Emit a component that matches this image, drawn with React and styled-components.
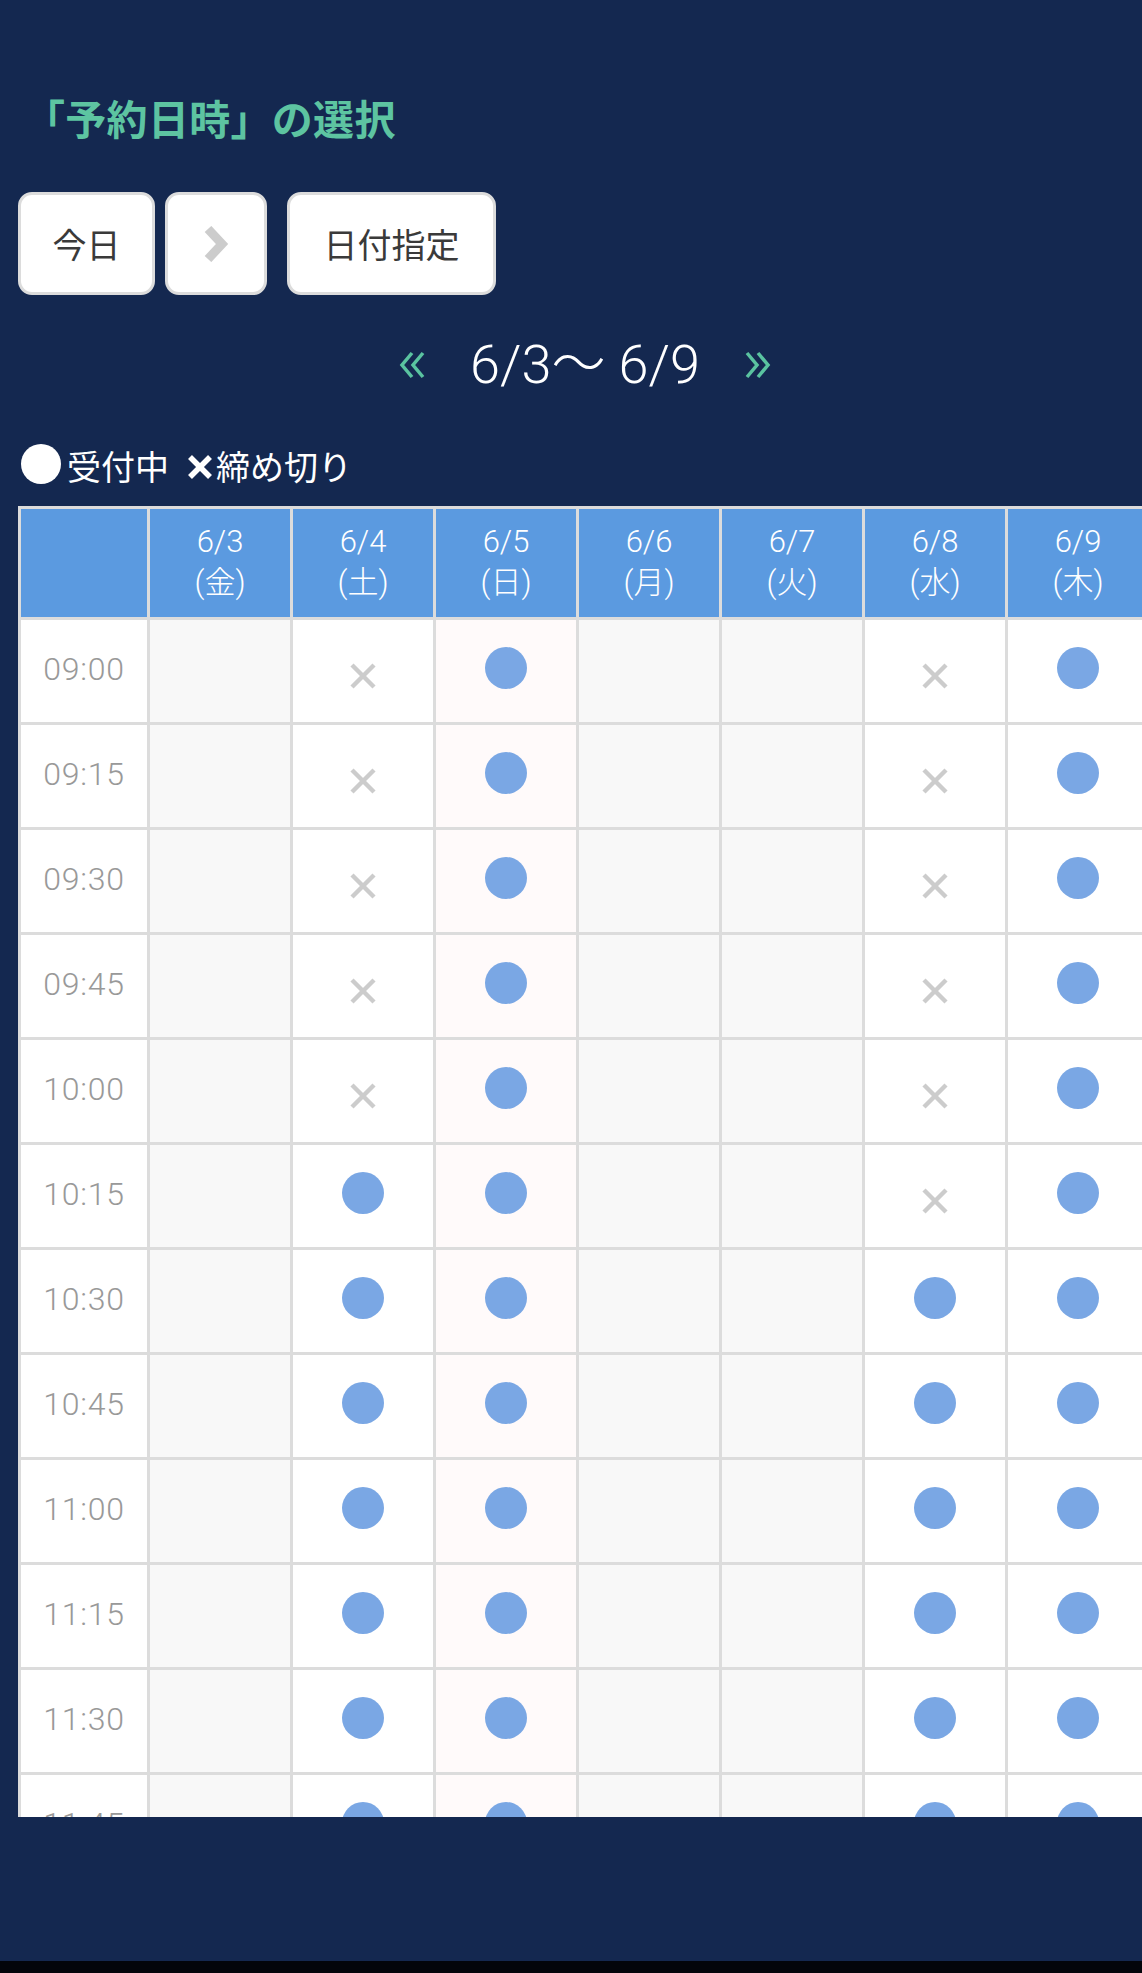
import React from "react";
import styled, { createGlobalStyle } from "styled-components";

const GlobalStyle = createGlobalStyle`
  html, body {
    margin: 0;
    padding: 0;
    background: #03050b;
  }
  body {
    font-family: "Noto Sans CJK JP", "Noto Sans", sans-serif;
  }
`;

const numFont = `"Roboto", "Noto Sans CJK JP", sans-serif`;

const Page = styled.div`
  background: #142850;
  height: 1961px;
  padding-top: 92px;
  box-sizing: border-box;
  overflow: hidden;
`;

const Title = styled.h1`
  margin: 0;
  padding-left: 24px;
  font-size: 41px;
  line-height: 50px;
  font-weight: 700;
  color: #5dc4a1;
  letter-spacing: 0.3px;
`;

const Toolbar = styled.div`
  display: flex;
  gap: 10px;
  margin-top: 50px;
  padding-left: 18px;
`;

const ToolButton = styled.button`
  width: ${(p) => p.$w}px;
  height: 103px;
  margin-left: ${(p) => p.$offset || 0}px;
  padding: 0;
  box-sizing: border-box;
  background: #fff;
  border: 3px solid #dcdcdc;
  border-radius: 14px;
  font-family: "Noto Sans CJK JP", sans-serif;
  font-size: 34px;
  color: #3a3a3a;
  display: flex;
  align-items: center;
  justify-content: center;
`;

const RangeRow = styled.div`
  margin-top: 40px;
  height: 60px;
  display: flex;
  align-items: center;
  justify-content: center;
  gap: 45px;
  padding-left: 28px;
`;

const RangeText = styled.span`
  font-family: ${numFont};
  font-size: 54px;
  line-height: 60px;
  font-weight: 300;
  color: #fff;
`;

const Legend = styled.div`
  margin-top: 49px;
  height: 44px;
  display: flex;
  align-items: center;
  padding-left: 21px;
  color: #fff;
  font-size: 34px;
  line-height: 44px;
`;

const LegendDot = styled.span`
  width: 40px;
  height: 40px;
  border-radius: 50%;
  background: #fff;
  margin-right: 6px;
  margin-top: -4px;
`;

const LegendCross = styled.svg`
  margin: 2px 3px 0 18px;
`;

const TableWrap = styled.div`
  margin-top: 18px;
  margin-left: 18px;
  height: 1311px;
  overflow: hidden;
`;

const Table = styled.table`
  width: 1133px;
  table-layout: fixed;
  border-collapse: separate;
  border-spacing: 0;
  border-top: 3px solid #dcdcdc;
  border-left: 3px solid #dcdcdc;
`;

const HeadCell = styled.th`
  box-sizing: border-box;
  width: ${(p) => (p.$time ? 129 : 143)}px;
  height: 111px;
  padding: 0 0 2px;
  background: #5b9ae0;
  border-right: 3px solid #dcdcdc;
  border-bottom: 3px solid #dcdcdc;
  color: #fff;
  font-family: ${numFont};
  font-weight: 300;
  font-size: 31px;
  line-height: 41px;
  text-align: center;
`;

const Cell = styled.td`
  box-sizing: border-box;
  height: 105px;
  padding: 0;
  background: ${(p) => p.$bg};
  border-right: 3px solid #dcdcdc;
  border-bottom: 3px solid #dcdcdc;
  text-align: center;
  vertical-align: middle;
`;

const TimeLabel = styled.span`
  display: block;
  margin-top: -4px;
  font-family: ${numFont};
  font-size: 32px;
  font-weight: 300;
  color: #999;
  letter-spacing: 0.8px;
`;

const Dot = styled.div`
  width: 42px;
  height: 42px;
  border-radius: 50%;
  background: #7aa7e4;
  margin: -6px auto 0;
`;

const CrossWrap = styled.svg`
  display: block;
  margin: 10px auto 0;
`;

const ChevronRight = () => (
  <svg width="26" height="36" viewBox="0 0 26 36">
    <polyline
      points="5,3 19,18 5,33"
      fill="none"
      stroke="#cccccc"
      strokeWidth="9"
      strokeLinejoin="miter"
    />
  </svg>
);

const DoubleArrow = ({ dir }) => (
  <svg width="26" height="28" viewBox="0 0 26 28">
    <g
      fill="none"
      stroke="#5ac3a0"
      strokeWidth="3.5"
      transform={dir === "right" ? "translate(26,0) scale(-1,1)" : undefined}
    >
      <polyline points="13,2 3,14 13,26" />
      <polyline points="24,2 14,14 24,26" />
    </g>
  </svg>
);

const Cross = () => (
  <CrossWrap width="26" height="26" viewBox="0 0 26 26">
    <g stroke="#cccccc" strokeWidth="4.5">
      <line x1="2" y1="2" x2="24" y2="24" />
      <line x1="24" y1="2" x2="2" y2="24" />
    </g>
  </CrossWrap>
);

const days = [
  { date: "6/3", wd: "金", bg: "#f8f8f8", closed: true },
  { date: "6/4", wd: "土", bg: "#ffffff", fullUntil: 5 },
  { date: "6/5", wd: "日", bg: "#fffafa", fullUntil: 0 },
  { date: "6/6", wd: "月", bg: "#f8f8f8", closed: true },
  { date: "6/7", wd: "火", bg: "#f8f8f8", closed: true },
  { date: "6/8", wd: "水", bg: "#ffffff", fullUntil: 6 },
  { date: "6/9", wd: "木", bg: "#ffffff", fullUntil: 0 },
];

const times = [
  "09:00", "09:15", "09:30", "09:45", "10:00", "10:15",
  "10:30", "10:45", "11:00", "11:15", "11:30", "11:45",
];

export default function App() {
  return (
    <>
      <GlobalStyle />
      <Page>
        <Title>「予約日時」の選択</Title>
        <Toolbar>
          <ToolButton $w={137}>今日</ToolButton>
          <ToolButton $w={102}>
            <ChevronRight />
          </ToolButton>
          <ToolButton $w={209} $offset={10}>日付指定</ToolButton>
        </Toolbar>
        <RangeRow>
          <DoubleArrow dir="left" />
          <RangeText>6/3〜 6/9</RangeText>
          <DoubleArrow dir="right" />
        </RangeRow>
        <Legend>
          <LegendDot />
          受付中
          <LegendCross width="26" height="24" viewBox="0 0 26 24">
            <g stroke="#ffffff" strokeWidth="5.5">
              <line x1="3" y1="2" x2="23" y2="22" />
              <line x1="23" y1="2" x2="3" y2="22" />
            </g>
          </LegendCross>
          締め切り
        </Legend>
        <TableWrap>
          <Table>
            <thead>
              <tr>
                <HeadCell $time />
                {days.map((d) => (
                  <HeadCell key={d.date}>
                    {d.date}
                    <br />({d.wd})
                  </HeadCell>
                ))}
              </tr>
            </thead>
            <tbody>
              {times.map((t, i) => (
                <tr key={t}>
                  <Cell $bg="#ffffff">
                    <TimeLabel>{t}</TimeLabel>
                  </Cell>
                  {days.map((d) => (
                    <Cell key={d.date} $bg={d.bg}>
                      {d.closed ? null : i < d.fullUntil ? <Cross /> : <Dot />}
                    </Cell>
                  ))}
                </tr>
              ))}
            </tbody>
          </Table>
        </TableWrap>
      </Page>
    </>
  );
}
